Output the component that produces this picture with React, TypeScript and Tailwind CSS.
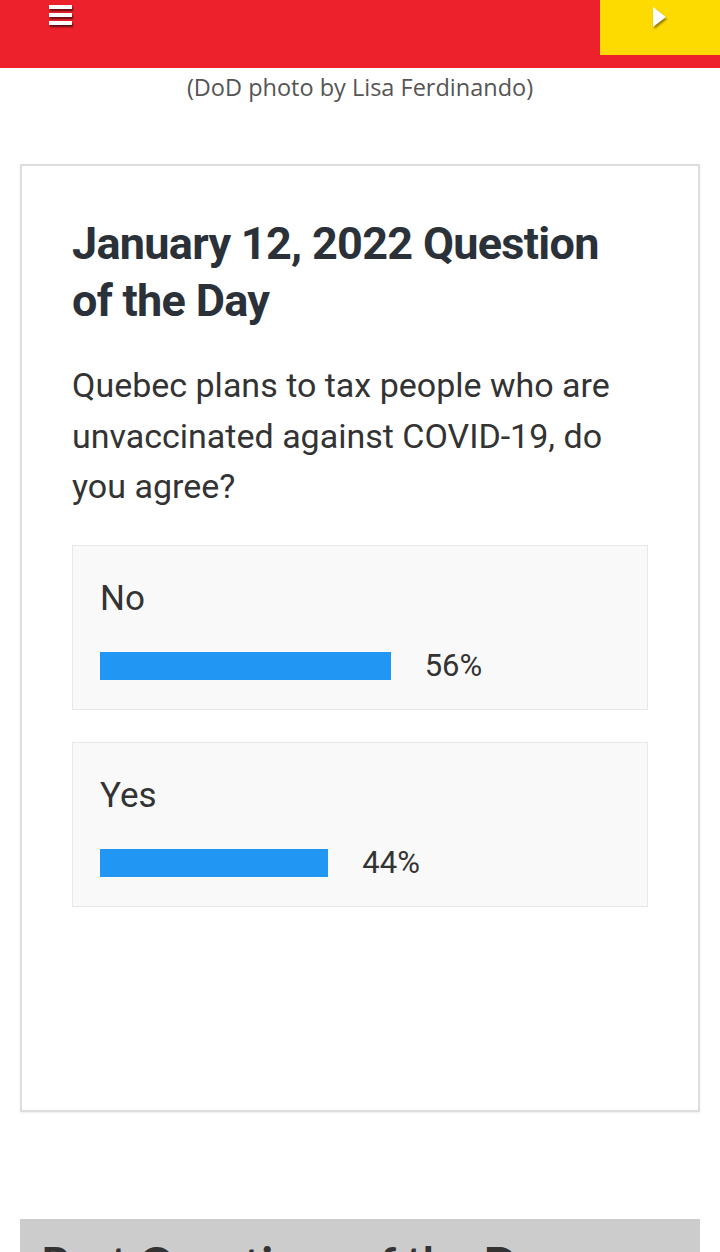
import React from "react";

const options = [
  { label: "No", pct: 56 },
  { label: "Yes", pct: 44 },
];

export default function App() {
  return (
    <div className="w-[720px] min-h-[1252px] bg-white overflow-hidden">
      {/* Header */}
      <div className="h-[68px] bg-[#ec212b] flex items-start justify-between">
        <div className="ml-[49px] mt-[5px] flex flex-col gap-[4px]">
          <div className="w-[23px] h-[4px] bg-white shadow-[1px_2px_2px_rgba(0,0,0,0.6)]" />
          <div className="w-[23px] h-[4px] bg-white shadow-[1px_2px_2px_rgba(0,0,0,0.6)]" />
          <div className="w-[23px] h-[4px] bg-white shadow-[1px_2px_2px_rgba(0,0,0,0.6)]" />
        </div>
        <div className="w-[120px] h-[55px] bg-[#fedb00] flex items-start pl-[53px] pt-[7px]">
          <svg width="16" height="22" viewBox="0 0 16 22" className="drop-shadow-[1px_2px_1px_rgba(0,0,0,0.45)]">
            <polygon points="0,0 13,10 0,20" fill="#ffffff" />
          </svg>
        </div>
      </div>

      {/* Caption */}
      <div className="text-center text-[23.5px] leading-[38px] text-[#555]" style={{ fontFamily: '"Open Sans", sans-serif' }}>
        (DoD photo by Lisa Ferdinando)
      </div>

      {/* Card */}
      <div className="mx-[20px] mt-[58px] border-2 border-[#dddddd] shadow-[0_1px_2px_rgba(0,0,0,0.08)] px-[50px] pt-[49px] pb-[203px]" style={{ fontFamily: 'Roboto, sans-serif' }}>
        <h1 className="text-[45px] leading-[57px] font-bold text-[#2a3139] -tracking-[0.7px]">
          January 12, 2022 Question of the Day
        </h1>
        <p className="mt-[31px] text-[34px] leading-[50.5px] text-[#333]">
          Quebec plans to tax people who are unvaccinated against COVID-19, do you agree?
        </p>
        <div className="mt-[33px] flex flex-col gap-[32px]">
          {options.map((o) => (
            <div key={o.label} className="bg-[#f9f9f9] border border-[#e8e8e8] pl-[27px] pr-[28px] pt-[30px] pb-[29px]">
              <div className="text-[35px] leading-[46px] text-[#333]">{o.label}</div>
              <div className="mt-[30px] flex items-center h-[28px]">
                <div className="h-[28px] bg-[#2196f3]" style={{ width: `${(o.pct / 100) * 519}px` }} />
                <span className="ml-[34px] text-[31px] leading-[28px] text-[#333]">{o.pct}%</span>
              </div>
            </div>
          ))}
        </div>
      </div>

      {/* Past questions */}
      <div className="mx-[20px] mt-[107px] bg-[#cccccc] px-[21px] pt-[14px] h-[200px]">
        <h2 className="text-[45px] leading-[60px] font-bold text-[#333]" style={{ fontFamily: 'Lato, sans-serif' }}>
          Past Questions of the Day
        </h2>
      </div>
    </div>
  );
}
